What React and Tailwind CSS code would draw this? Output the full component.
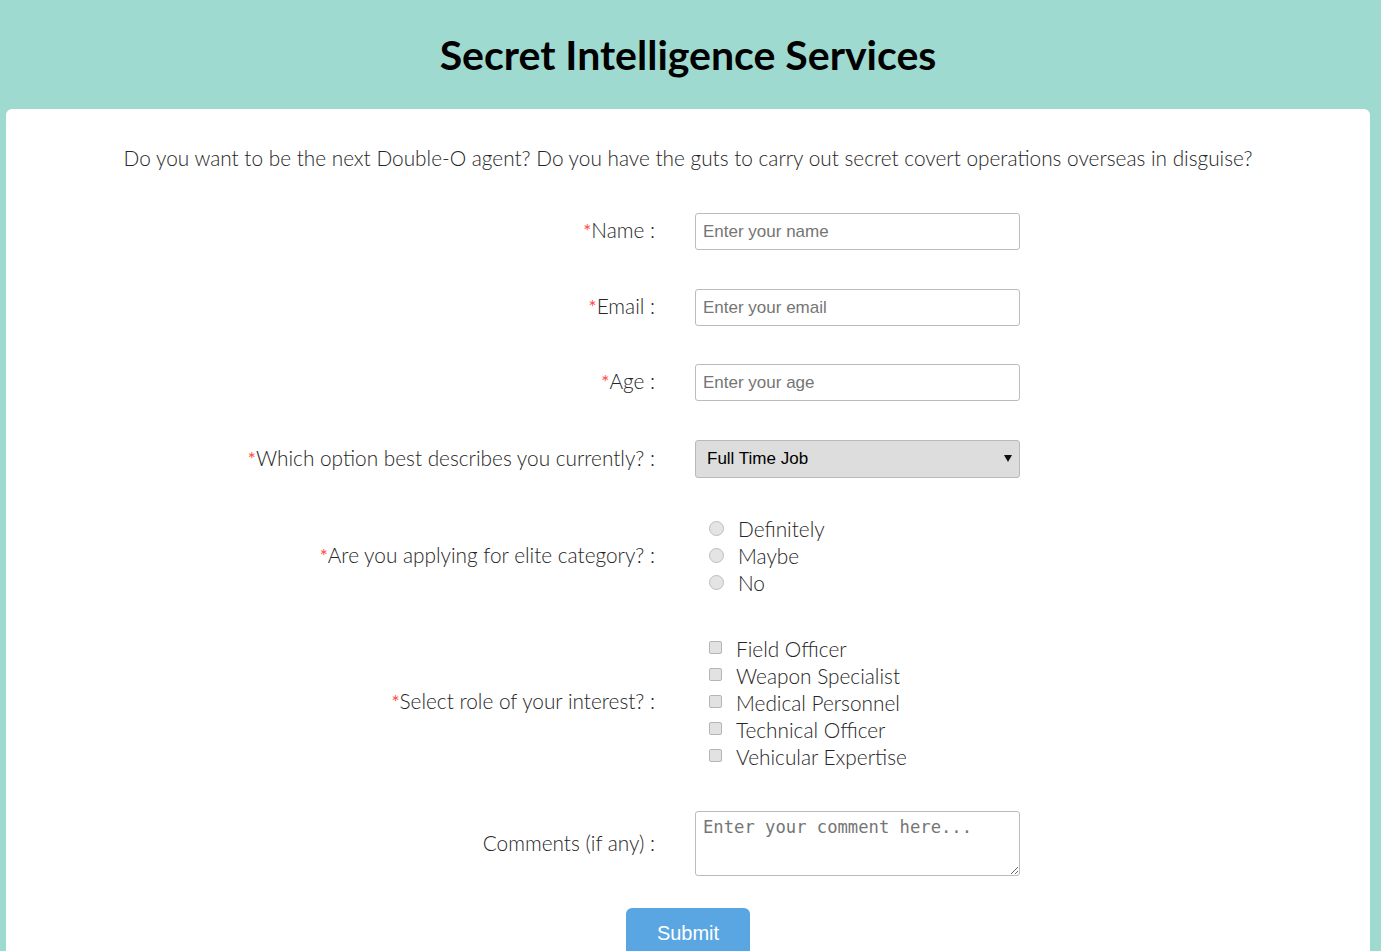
import React, { useState } from "react";

const Req = () => <span className="text-[#ff4b45] text-[19px] font-normal">*</span>;

const Label = ({ children, required = true }) => (
  <div className="text-right text-[20.8px] leading-[28px] text-[#262626] font-light relative top-[-1px]">
    {required && <Req />}
    {children} :
  </div>
);

const inputCls =
  "w-[325px] h-[37px] border border-[#bcbcbc] rounded-[3px] px-[7px] text-[17px] text-[#333] placeholder:text-[#757575] outline-none font-['Liberation_Sans',Arial,sans-serif]";

export default function App() {
  const [status, setStatus] = useState("Full Time Job");
  const [elite, setElite] = useState("");
  const [roles, setRoles] = useState([]);

  const toggleRole = (r) => {
    setRoles((prev) => (prev.includes(r) ? prev.filter((x) => x !== r) : [...prev, r]));
  };

  const roleList = [
    "Field Officer",
    "Weapon Specialist",
    "Medical Personnel",
    "Technical Officer",
    "Vehicular Expertise",
  ];

  return (
    <div className="min-h-screen bg-[#9edad0] font-['Lato','Open_Sans',sans-serif] pl-[6px] pr-[11px]">
      <div className="h-[109px] flex items-center justify-center">
        <h1 className="text-[41px] leading-[50px] font-bold text-black">
          Secret Intelligence Services
        </h1>
      </div>

      <div className="bg-white rounded-t-[6px] pt-[35px] pb-[60px]">
        <p className="text-center text-[20.8px] leading-[28px] font-light text-[#262626]">
          Do you want to be the next Double-O agent? Do you have the guts to carry out secret covert operations overseas in disguise?
        </p>

        <form className="mt-[41px] grid grid-cols-[649px_1fr] gap-x-[40px] items-center">
          <Label>Name</Label>
          <input className={inputCls} placeholder="Enter your name" />

          <div className="col-span-2 h-[39px]" />
          <Label>Email</Label>
          <input className={inputCls} placeholder="Enter your email" />

          <div className="col-span-2 h-[38px]" />
          <Label>Age</Label>
          <input className={inputCls} placeholder="Enter your age" />

          <div className="col-span-2 h-[39px]" />
          <Label>Which option best describes you currently?</Label>
          <div className="relative w-[325px]">
            <select
              value={status}
              onChange={(e) => setStatus(e.target.value)}
              className="appearance-none w-full h-[38px] bg-[#dddddd] border border-[#b9b9b9] rounded-[3px] pl-[11px] text-[17px] text-black outline-none font-['Liberation_Sans',Arial,sans-serif]"
            >
              <option>Student</option>
              <option>Full Time Job</option>
              <option>Part Time Job</option>
              <option>Other</option>
            </select>
            <svg
              className="absolute right-[8px] top-[15px] pointer-events-none"
              width="8"
              height="7"
              viewBox="0 0 8 7"
            >
              <path d="M0 0h8L4 7z" fill="#111" />
            </svg>
          </div>

          <div className="col-span-2 h-[38px]" />
          <Label>Are you applying for elite category?</Label>
          <div className="flex flex-col pl-[14px] relative top-[-1px]">
            {["Definitely", "Maybe", "No"].map((opt) => (
              <label key={opt} className="flex items-center h-[27px] text-[20.8px] font-light text-[#262626]">
                <input
                  type="radio"
                  name="elite"
                  checked={elite === opt}
                  onChange={() => setElite(opt)}
                  className="appearance-none w-[15px] h-[15px] rounded-full border border-[#bdbdbd] bg-[#e4e4e4] checked:bg-[#5da9e3] mr-[14px] shrink-0"
                />
                {opt}
              </label>
            ))}
          </div>

          <div className="col-span-2 h-[38px]" />
          <Label>Select role of your interest?</Label>
          <div className="flex flex-col pl-[14px]">
            {roleList.map((r) => (
              <label key={r} className="flex items-center h-[27px] text-[20.8px] font-light text-[#262626]">
                <input
                  type="checkbox"
                  checked={roles.includes(r)}
                  onChange={() => toggleRole(r)}
                  className="appearance-none w-[13px] h-[13px] rounded-[2px] border border-[#b5b5b5] bg-[#e2e2e2] checked:bg-[#5da9e3] mr-[14px] shrink-0 relative top-[-1px]"
                />
                {r}
              </label>
            ))}
          </div>

          <div className="col-span-2 h-[41px]" />
          <Label required={false}>Comments (if any)</Label>
          <textarea
            placeholder="Enter your comment here..."
            className="w-[325px] h-[65px] border border-[#bcbcbc] rounded-[3px] px-[7px] py-[3px] text-[17.2px] leading-[24px] placeholder:text-[#757575] outline-none font-['DejaVu_Sans_Mono',monospace]"
          />
        </form>

        <div className="mt-[32px] flex justify-center">
          <button
            type="button"
            className="w-[124px] h-[50px] bg-[#5aa6e2] text-white text-[20px] rounded-[6px] font-['Liberation_Sans',Arial,sans-serif]"
          >
            Submit
          </button>
        </div>
      </div>
    </div>
  );
}
